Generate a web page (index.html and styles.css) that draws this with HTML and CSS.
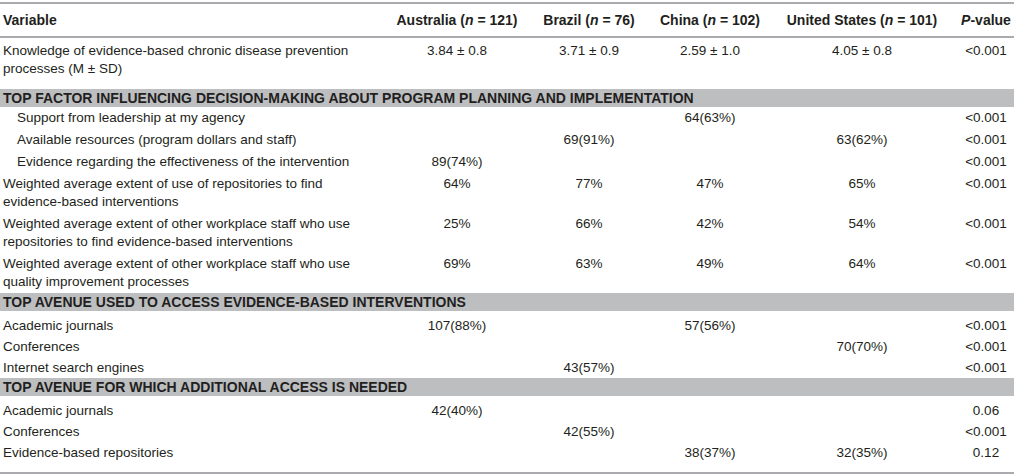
FILE: index.html
```html
<!DOCTYPE html>
<html lang="en">
<head>
<meta charset="utf-8">
<title>Table</title>
<link rel="stylesheet" href="styles.css">
</head>
<body>
<table class="data">
  <colgroup>
    <col class="c-var">
    <col class="c-au">
    <col class="c-br">
    <col class="c-cn">
    <col class="c-us">
    <col class="c-p">
  </colgroup>
  <thead>
    <tr class="head">
      <th class="var">Variable</th>
      <th>Australia (<i>n</i> = 121)</th>
      <th>Brazil (<i>n</i> = 76)</th>
      <th>China (<i>n</i> = 102)</th>
      <th>United States (<i>n</i> = 101)</th>
      <th class="pv"><i>P</i>-value</th>
    </tr>
  </thead>
  <tbody>
    <tr class="first">
      <td class="var">Knowledge of evidence-based chronic disease prevention processes (M ± SD)</td>
      <td>3.84 ± 0.8</td>
      <td>3.71 ± 0.9</td>
      <td>2.59 ± 1.0</td>
      <td>4.05 ± 0.8</td>
      <td class="pv">&lt;0.001</td>
    </tr>
    <tr class="band"><td colspan="6">TOP FACTOR INFLUENCING DECISION-MAKING ABOUT PROGRAM PLANNING AND IMPLEMENTATION</td></tr>
    <tr>
      <td class="var sub">Support from leadership at my agency</td>
      <td></td><td></td><td>64(63%)</td><td></td><td class="pv">&lt;0.001</td>
    </tr>
    <tr>
      <td class="var sub">Available resources (program dollars and staff)</td>
      <td></td><td>69(91%)</td><td></td><td>63(62%)</td><td class="pv">&lt;0.001</td>
    </tr>
    <tr>
      <td class="var sub">Evidence regarding the effectiveness of the intervention</td>
      <td>89(74%)</td><td></td><td></td><td></td><td class="pv">&lt;0.001</td>
    </tr>
    <tr>
      <td class="var">Weighted average extent of use of repositories to find evidence-based interventions</td>
      <td>64%</td><td>77%</td><td>47%</td><td>65%</td><td class="pv">&lt;0.001</td>
    </tr>
    <tr>
      <td class="var">Weighted average extent of other workplace staff who use repositories to find evidence-based interventions</td>
      <td>25%</td><td>66%</td><td>42%</td><td>54%</td><td class="pv">&lt;0.001</td>
    </tr>
    <tr>
      <td class="var">Weighted average extent of other workplace staff who use quality improvement processes</td>
      <td>69%</td><td>63%</td><td>49%</td><td>64%</td><td class="pv">&lt;0.001</td>
    </tr>
  </tbody>
  <tbody class="tight">
    <tr class="band"><td colspan="6">TOP AVENUE USED TO ACCESS EVIDENCE-BASED INTERVENTIONS</td></tr>
    <tr class="lead">
      <td class="var">Academic journals</td>
      <td>107(88%)</td><td></td><td>57(56%)</td><td></td><td class="pv">&lt;0.001</td>
    </tr>
    <tr>
      <td class="var">Conferences</td>
      <td></td><td></td><td></td><td>70(70%)</td><td class="pv">&lt;0.001</td>
    </tr>
    <tr>
      <td class="var">Internet search engines</td>
      <td></td><td>43(57%)</td><td></td><td></td><td class="pv">&lt;0.001</td>
    </tr>
  </tbody>
  <tbody class="tight">
    <tr class="band"><td colspan="6">TOP AVENUE FOR WHICH ADDITIONAL ACCESS IS NEEDED</td></tr>
    <tr class="lead">
      <td class="var">Academic journals</td>
      <td>42(40%)</td><td></td><td></td><td></td><td class="pv">0.06</td>
    </tr>
    <tr>
      <td class="var">Conferences</td>
      <td></td><td>42(55%)</td><td></td><td></td><td class="pv">&lt;0.001</td>
    </tr>
    <tr class="last">
      <td class="var">Evidence-based repositories</td>
      <td></td><td></td><td>38(37%)</td><td>32(35%)</td><td class="pv">0.12</td>
    </tr>
  </tbody>
</table>
</body>
</html>
```

FILE: styles.css
```css
html, body {
  margin: 0;
  padding: 0;
  background: #ffffff;
}

body {
  font-family: "Liberation Sans", Arial, sans-serif;
  font-size: 13.5px;
  color: #231f20;
}

.data {
  width: 1014px;
  margin-top: 2px;
  border-collapse: collapse;
  table-layout: fixed;
  border-top: 2px solid #a9abae;
  border-bottom: 2px solid #a9abae;
}

.c-var { width: 390px; }
.c-au { width: 134px; }
.c-br { width: 130px; }
.c-cn { width: 112px; }
.c-us { width: 192px; }
.c-p { width: 56px; }

.data th,
.data td {
  padding: 2px 3px;
  line-height: 18px;
  text-align: center;
  vertical-align: top;
  white-space: nowrap;
}

.data th.var,
.data td.var {
  text-align: left;
  white-space: normal;
  padding-right: 27px;
}

.data td.sub {
  padding-left: 17px;
}

.data .pv {
  padding-left: 0;
  padding-right: 0;
}

.head th {
  font-weight: bold;
  font-size: 14px;
  height: 32px;
  padding-top: 0;
  padding-bottom: 0;
  vertical-align: middle;
  border-bottom: 2px solid #a9abae;
}

.head th i {
  font-weight: bold;
}

.first td {
  padding-top: 4px;
  padding-bottom: 11px;
}

.data .band td {
  background: #bcbec0;
  font-weight: bold;
  font-size: 14px;
  text-align: left;
  padding: 0 3px;
}

.tight td {
  padding-top: 2px;
  padding-bottom: 1px;
}

.data .tight .lead td {
  padding-top: 6px;
}

.data .tight .last td {
  padding-bottom: 10px;
}
```
